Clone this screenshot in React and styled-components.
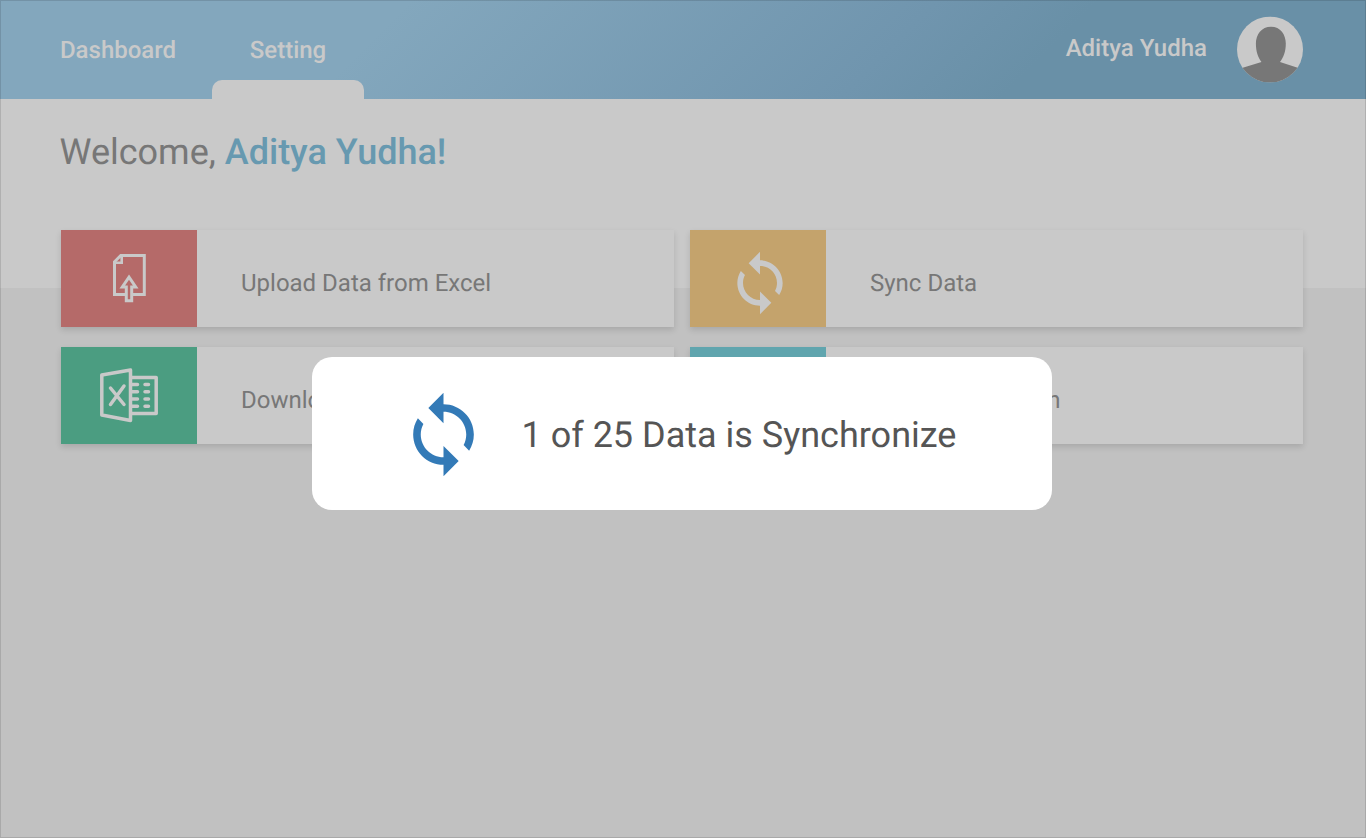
import React from 'react';
import styled, { createGlobalStyle } from 'styled-components';

const GlobalStyle = createGlobalStyle`
  *, *::before, *::after { box-sizing: border-box; }
  body { margin: 0; font-family: Roboto, sans-serif; background: #c1c1c1; -webkit-font-smoothing: antialiased; text-rendering: geometricPrecision; }
`;

const Page = styled.div`
  position: relative;
  width: 1366px;
  height: 838px;
  overflow: hidden;
  background: linear-gradient(#c9c9c9 288px, #c1c1c1 288px);
`;

const Frame = styled.div`
  position: absolute;
  inset: 0;
  border: 1px solid rgba(0, 0, 0, 0.12);
  pointer-events: none;
`;

const Header = styled.header`
  display: flex;
  justify-content: space-between;
  height: 99px;
  padding: 0 63px 0 60px;
  background: linear-gradient(135deg, #83a7bd 28%, #7095ae 64%, #6990a7 75%);
`;

const Nav = styled.nav`
  display: flex;
`;

const NavItem = styled.a`
  display: flex;
  flex-direction: column;
  justify-content: space-between;
  align-items: center;
  width: ${(p) => p.$width}px;
  padding-top: 36px;
  font-size: 24px;
  line-height: 28px;
  font-weight: 500;
  color: #c9c9c9;
`;

const ActiveTab = styled.span`
  width: 152px;
  height: 19px;
  border-radius: 10px 10px 0 0;
  background: #c9c9c9;
`;

const Profile = styled.div`
  display: flex;
  gap: 30px;
  padding-top: 16px;
`;

const ProfileName = styled.span`
  padding-top: 18px;
  font-size: 24px;
  line-height: 28px;
  font-weight: 500;
  color: #c9c9c9;
`;

const Main = styled.main`
  padding: 32px 63px 0 61px;
`;

const Welcome = styled.h1`
  margin: 0 0 57px -1.500px;
  font-size: 36px;
  line-height: 42px;
  font-weight: 400;
  color: #777;
`;

const UserName = styled.strong`
  font-weight: 500;
  color: #6799b0;
`;

const Cards = styled.div`
  display: grid;
  grid-template-columns: 613px 613px;
  grid-auto-rows: 97px;
  gap: 20px 16px;
`;

const Card = styled.div`
  display: flex;
  background: #c9c9c9;
  box-shadow: 0 3px 6px rgba(0, 0, 0, 0.13);
`;

const Tile = styled.div`
  display: flex;
  width: 136px;
  padding: ${(p) => p.$pad};
  background: ${(p) => p.$color};
`;

const CardLabel = styled.span`
  padding: 39px 0 0 44px;
  font-size: 24px;
  line-height: 28px;
  color: #777;
`;

const Dialog = styled.div`
  position: absolute;
  left: 312px;
  top: 357px;
  display: flex;
  width: 740px;
  height: 153px;
  padding: 32px 0 0 86px;
  border-radius: 20px;
  background: #fff;
`;

const DialogText = styled.p`
  margin: 25px 0 0 32.500px;
  font-size: 36px;
  line-height: 42px;
  color: #555;
  white-space: nowrap;
`;

const SyncIcon = ({ size, color }) => (
  <svg width={size} height={size} viewBox="0 0 24 24" fill={color}>
    <path d="M12 4V1L8 5l4 4V6c3.31 0 6 2.69 6 6 0 1.01-.25 1.97-.7 2.8l1.46 1.46C19.54 15.03 20 13.57 20 12c0-4.42-3.58-8-8-8zm0 14c-3.31 0-6-2.69-6-6 0-1.01.25-1.97.7-2.8L5.24 7.74C4.46 8.97 4 10.43 4 12c0 4.42 3.58 8 8 8v3l4-4-4-4v3z" />
  </svg>
);

const UploadIcon = () => (
  <svg width="34" height="50" viewBox="0 0 34 50" fill="none" stroke="#c9c9c9" strokeWidth="3">
    <path d="M12 40.500H1.500V7.800L7.800 1.500H31.300V40.500H20" />
    <path d="M1.500 8.800H8.700V1.500" strokeWidth="2.600" />
    <path d="M16 23.200L22.700 33H18.700V46.700H13.300V33H9.300Z" strokeWidth="3" />
  </svg>
);

const ExcelIcon = () => (
  <svg width="58" height="55" viewBox="0 0 58 55" fill="none" stroke="#c9c9c9" strokeWidth="3.500" strokeLinejoin="round" strokeLinecap="round">
    <path d="M1.800 7L30.500 2V52.500L1.800 47Z" />
    <path d="M31 9.500H56.200V45.500H31" />
    <path d="M10.500 20L24 36.500M24 18L10.500 36.500" />
    <path d="M32 16.500H37.500M45 16.500H48.500M32 23.700H37.500M45 23.700H48.500M32 31H37.500M45 31H48.500M32 38.200H37.500M45 38.200H48.500" />
  </svg>
);

const Avatar = () => (
  <svg width="66" height="67" viewBox="0 -0.500 66 67">
    <defs>
      <clipPath id="avatar"><circle cx="33" cy="33" r="33" /></clipPath>
    </defs>
    <g clipPath="url(#avatar)">
      <rect width="66" height="66" fill="#c9c9c9" />
      <path fill="#777" d="M34 10.200C43.500 10.200 48.800 18 48.800 27C48.800 35 46.500 41 43 45.500L66 53V66H0V53L24.500 45.500C21 41 18.900 35 18.900 27C18.900 18 24.500 10.200 34 10.200Z" />
    </g>
  </svg>
);

export default function App() {
  return (
    <Page>
      <GlobalStyle />
      <Header>
        <Nav>
          <NavItem $width={116}>Dashboard</NavItem>
          <NavItem $width={224}>
            Setting
            <ActiveTab />
          </NavItem>
        </Nav>
        <Profile>
          <ProfileName>Aditya Yudha</ProfileName>
          <Avatar />
        </Profile>
      </Header>
      <Main>
        <Welcome>
          Welcome, <UserName>Aditya Yudha!</UserName>
        </Welcome>
        <Cards>
          <Card>
            <Tile $color="#b56a69" $pad="24px 0 0 52px"><UploadIcon /></Tile>
            <CardLabel>Upload Data from Excel</CardLabel>
          </Card>
          <Card>
            <Tile $color="#c4a36c" $pad="19px 0 0 36px"><SyncIcon size={68} color="#c9c9c9" /></Tile>
            <CardLabel>Sync Data</CardLabel>
          </Card>
          <Card>
            <Tile $color="#4b9d81" $pad="21px 0 0 39px"><ExcelIcon /></Tile>
            <CardLabel>Download</CardLabel>
          </Card>
          <Card>
            <Tile $color="#60a5ae" />
            <CardLabel>About Application</CardLabel>
          </Card>
        </Cards>
      </Main>
      <Frame />
      <Dialog role="dialog">
        <SyncIcon size={91} color="#337ab7" />
        <DialogText>1 of 25 Data is Synchronize</DialogText>
      </Dialog>
    </Page>
  );
}
